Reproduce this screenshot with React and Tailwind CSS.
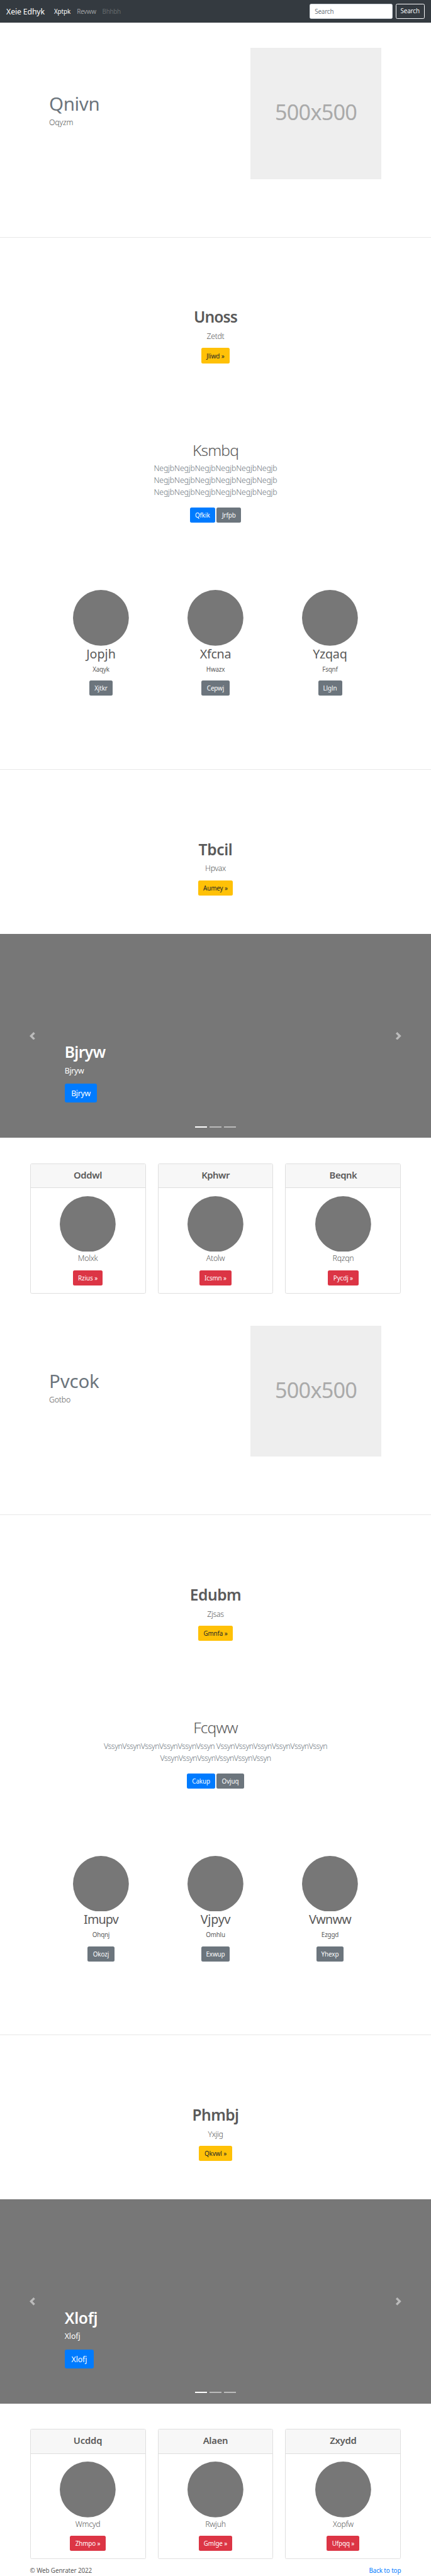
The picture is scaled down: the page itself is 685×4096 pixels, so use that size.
import React from "react";

function Nav() {
  return (
    <nav className="flex h-[35.5px] items-center bg-[#343a40] px-[10.1px] text-[9.85px] leading-[15px] text-white">
      <a className="mt-px w-[75.8px] text-[12.3px] leading-[19px] tracking-[-0.15px]">Xeie Edhyk</a>
      <a className="mt-px w-[36.3px] tracking-[-0.05px]">Xptpk</a>
      <a className="mt-px w-[40.4px] tracking-[-0.3px] text-white/50">Revww</a>
      <a className="mt-px tracking-[-0.3px] text-white/25">Bhhbh</a>
      <form className="ml-auto flex gap-[5px]">
        <div className="flex h-[24.1px] w-[131.4px] items-center rounded-[2.5px] border border-[#ced4da] bg-white pt-px pl-[7px] tracking-[-0.15px] text-[#6c757d]">
          Search
        </div>
        <div className="flex h-[24.1px] w-[46.4px] items-center justify-center rounded-[2.5px] border border-[#f8f9fa] tracking-[-0.15px] text-[#f8f9fa]">
          Search
        </div>
      </form>
    </nav>
  );
}

function Button({ className, children }) {
  return (
    <a className={`flex h-[24.1px] items-center justify-center rounded-[2.5px] pt-px text-[9.85px] leading-[15px] tracking-[-0.1px] whitespace-nowrap ${className}`}>
      {children}
    </a>
  );
}

function Hero({ title, text, track }) {
  return (
    <section className="flex h-[341.2px] items-start justify-between pr-[78.6px] pl-[78px]">
      <div className="pt-[111px]">
        <h2 className={`text-[29.5px] leading-[36px] text-[#6c757d] ${track}`}>{title}</h2>
        <p className="mt-[2.4px] text-[12.3px] leading-[19px] font-light tracking-[-0.2px]">{text}</p>
      </div>
      <div className="mt-[40.6px] flex h-[208.7px] w-[208.7px] items-center justify-center bg-[#eeeeee] pb-[5px] text-[34.2px] leading-[40px] tracking-[-0.75px] text-[#aaaaaa]">
        500x500
      </div>
    </section>
  );
}

function Promo({ title, text, track, button, buttonWidth }) {
  return (
    <section className="flex flex-col items-center border-t border-[#e8e8e8] pt-[111.8px]">
      <h1 className={`text-[24.6px] leading-[30px] font-semibold ${track}`}>{title}</h1>
      <p className="mt-[5.5px] text-[12.3px] leading-[19px] font-light tracking-[-0.35px]">{text}</p>
      <Button className={`mt-[9.5px] bg-[#ffc107] text-[#212529] ${buttonWidth}`}>{button} »</Button>
    </section>
  );
}

function Album({ title, titleTrack, lines, lineTrack, primary, primaryWidth, secondary, secondaryWidth }) {
  return (
    <section className="flex flex-col items-center pt-[123px]">
      <h1 className={`text-[24.6px] leading-[30px] font-light ${titleTrack}`}>{title}</h1>
      <p className={`mt-[4.7px] text-center text-[12.3px] leading-[19.03px] font-light text-[#6c757d] ${lineTrack}`}>
        {lines.map((line, i) => (
          <span key={i} className="block whitespace-nowrap">{line}</span>
        ))}
      </p>
      <div className="mt-[15px] flex gap-[2.5px]">
        <Button className={`bg-[#007bff] text-white ${primaryWidth}`}>{primary}</Button>
        <Button className={`bg-[#6c757d] text-white ${secondaryWidth}`}>{secondary}</Button>
      </div>
    </section>
  );
}

function Circle() {
  return (
    <svg className="block h-[88.8px] w-[88.8px]" viewBox="0 0 140 140">
      <circle cx="70" cy="70" r="70" fill="#777" />
    </svg>
  );
}

function Features({ items }) {
  return (
    <section className="mx-auto grid w-[546px] grid-cols-3 pt-[106.6px] pb-[116.7px]">
      {items.map((f) => (
        <div key={f.name} className="flex flex-col items-center">
          <Circle />
          <h2 className={`mt-[0.7px] text-[19.7px] leading-[24px] ${f.track}`}>{f.name}</h2>
          <p className="mt-[5.3px] text-[9.85px] leading-[15.2px] tracking-[-0.2px]">{f.text}</p>
          <Button className={`mt-[10px] bg-[#6c757d] text-white ${f.width}`}>{f.button}</Button>
        </div>
      ))}
    </section>
  );
}

function Carousel({ text, titleTrack, textTrack, buttonWidth }) {
  return (
    <section className="mt-[60.8px] flex h-[324.7px] bg-[#777777] text-white">
      <div className="flex w-[102.75px] items-center justify-center">
        <svg className="h-[12.7px] w-[12.7px] opacity-50" viewBox="0 0 8 8" fill="#fff">
          <path d="M5.25 0l-4 4 4 4 1.5-1.5L4.25 4l2.5-2.5L5.25 0z" />
        </svg>
      </div>
      <div className="flex flex-1 flex-col items-start pt-[173.5px]">
        <h1 className={`text-[24.6px] leading-[30px] font-semibold ${titleTrack}`}>{text}</h1>
        <p className={`mt-[4.5px] text-[12.3px] leading-[19px] ${textTrack}`}>{text}</p>
        <a className={`mt-[11.5px] flex h-[30.4px] items-center justify-center rounded-[3px] bg-[#007bff] pt-px text-[12.3px] leading-[19px] ${textTrack} ${buttonWidth}`}>
          {text}
        </a>
        <div className="mt-[37.2px] flex gap-[3.8px] self-center">
          <span className="h-[2px] w-[19px] bg-white" />
          <span className="h-[2px] w-[19px] bg-white/50" />
          <span className="h-[2px] w-[19px] bg-white/50" />
        </div>
      </div>
      <div className="flex w-[102.75px] items-center justify-center">
        <svg className="h-[12.7px] w-[12.7px] opacity-50" viewBox="0 0 8 8" fill="#fff">
          <path d="M2.75 0l-1.5 1.5L3.75 4l-2.5 2.5L2.75 8l4-4-4-4z" />
        </svg>
      </div>
    </section>
  );
}

function Cards({ items }) {
  return (
    <section className="grid grid-cols-3 gap-[19px] px-[47.6px] pt-[40.6px]">
      {items.map((c) => (
        <div key={c.title} className="flex h-[207.1px] flex-col overflow-hidden rounded-[2.5px] border border-[#dfdfdf]">
          <div className="h-[38.3px] border-b border-[#dfdfdf] bg-[#f7f7f7] pt-[8px] text-center">
            <h4 className={`text-[14.8px] leading-[18px] font-semibold ${c.track}`}>{c.title}</h4>
          </div>
          <div className="flex flex-col items-center pt-[12.6px]">
            <Circle />
            <p className="mt-[0.7px] text-[12.3px] leading-[19px] font-light tracking-[-0.3px]">{c.text}</p>
            <Button className={`mt-[9.5px] bg-[#dc3545] text-white ${c.width}`}>{c.button} »</Button>
          </div>
        </div>
      ))}
    </section>
  );
}

export default function App() {
  return (
    <div className="h-[4096px] w-[685px] overflow-hidden bg-white font-['Noto_Sans','Open_Sans',sans-serif] text-[#5a5a5a]">
      <Nav />

      <Hero title="Qnivn" text="Oqyzm" track="tracking-[-0.35px]" />
      <Promo title="Unoss" text="Zetdt" track="tracking-[-0.9px]" button="Jliwd" buttonWidth="w-[45.4px]" />
      <Album
        title="Ksmbq"
        titleTrack="tracking-[-0.9px]"
        lines={["NegjbNegjbNegjbNegjbNegjbNegjb", "NegjbNegjbNegjbNegjbNegjbNegjb", "NegjbNegjbNegjbNegjbNegjbNegjb"]}
        lineTrack="tracking-[-0.13px]"
        primary="Qfkik"
        primaryWidth="w-[40.2px]"
        secondary="Jrfpb"
        secondaryWidth="w-[38.9px]"
      />
      <Features
        items={[
          { name: "Jopjh", track: "tracking-[0px]", text: "Xaqyk", button: "Xjtkr", width: "w-[36.7px]" },
          { name: "Xfcna", track: "tracking-[-0.3px]", text: "Hwazx", button: "Cepwj", width: "w-[44.6px]" },
          { name: "Yzqaq", track: "tracking-[-0.2px]", text: "Fsqnf", button: "Llgln", width: "w-[38px]" },
        ]}
      />
      <Promo title="Tbcil" text="Hpvax" track="tracking-[-0.35px]" button="Aumey" buttonWidth="w-[55.9px]" />
      <Carousel text="Bjryw" titleTrack="tracking-[-0.6px]" textTrack="tracking-[-0.3px]" buttonWidth="w-[51.5px]" />
      <Cards
        items={[
          { title: "Oddwl", track: "tracking-[-0.3px]", text: "Molxk", button: "Rzius", width: "w-[47.6px]" },
          { title: "Kphwr", track: "tracking-[-0.45px]", text: "Atolw", button: "Icsmn", width: "w-[50.7px]" },
          { title: "Beqnk", track: "tracking-[-0.4px]", text: "Rqzqn", button: "Pycdj", width: "w-[48.5px]" },
        ]}
      />

      <div className="pt-[10.2px]">
        <Hero title="Pvcok" text="Gotbo" track="tracking-[-0.2px]" />
      </div>
      <Promo title="Edubm" text="Zjsas" track="tracking-[-0.5px]" button="Gmnfa" buttonWidth="w-[54.2px]" />
      <Album
        title="Fcqww"
        titleTrack="tracking-[-0.9px]"
        lines={["VssynVssynVssynVssynVssynVssyn VssynVssynVssynVssynVssynVssyn", "VssynVssynVssynVssynVssynVssyn"]}
        lineTrack="tracking-[-0.46px]"
        primary="Cakup"
        primaryWidth="w-[44.6px]"
        secondary="Ovjuq"
        secondaryWidth="w-[43.2px]"
      />
      <Features
        items={[
          { name: "Imupv", track: "tracking-[-0.8px]", text: "Ohqnj", button: "Okozj", width: "w-[42.4px]" },
          { name: "Vjpyv", track: "tracking-[-0.2px]", text: "Omhlu", button: "Exwup", width: "w-[45.4px]" },
          { name: "Vwnww", track: "tracking-[-0.7px]", text: "Ezggd", button: "Yhexp", width: "w-[43.7px]" },
        ]}
      />
      <Promo title="Phmbj" text="Yxjig" track="tracking-[-0.6px]" button="Qkvwl" buttonWidth="w-[52.4px]" />
      <Carousel text="Xlofj" titleTrack="tracking-[-0.3px]" textTrack="tracking-[-0.1px]" buttonWidth="w-[46.3px]" />
      <Cards
        items={[
          { title: "Ucddq", track: "tracking-[-0.15px]", text: "Wmcyd", button: "Zhmpo", width: "w-[57.2px]" },
          { title: "Alaen", track: "tracking-[-0.25px]", text: "Rwjuh", button: "Gmlge", width: "w-[53.3px]" },
          { title: "Zxydd", track: "tracking-[-0.2px]", text: "Xopfw", button: "Ufpqq", width: "w-[52px]" },
        ]}
      />

      <footer className="flex justify-between px-[47.6px] pt-[10.5px] text-[9.85px] leading-[15.2px]">
        <p className="tracking-[-0.1px]">© Web Genrater 2022</p>
        <a className="tracking-[-0.1px] text-[#007bff]">Back to top</a>
      </footer>
    </div>
  );
}
